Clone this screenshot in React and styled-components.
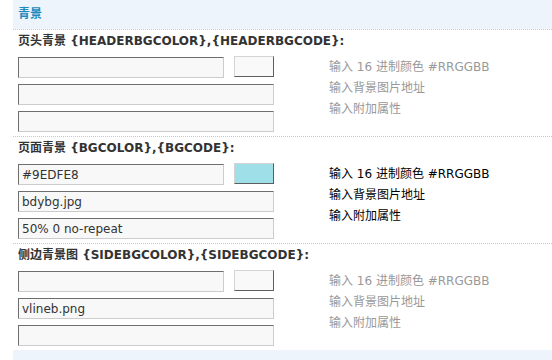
import React from "react";
import styled, { createGlobalStyle } from "styled-components";

const Global = createGlobalStyle`
  html, body { margin: 0; padding: 0; background: #fff; }
  body {
    font-family: "DejaVu Sans", "Noto Sans CJK SC", sans-serif;
    font-size: 12px;
    color: #333;
  }
`;

const Page = styled.div`
  margin-left: 13px;
  width: 539px;
`;

const Header = styled.div`
  height: 29px;
  line-height: 29px;
  padding-left: 5px;
  background: #eef4fb;
  color: #1b8bbf;
  font-weight: bold;
  font-size: 12px;
`;

const Section = styled.div`
  border-top: 1px dotted #c8c8c8;
  padding: 1px 0 4px 5px;
  display: grid;
  grid-template-columns: 311px 1fr;
  grid-template-rows: 20px auto;
  row-gap: 6px;
`;

const Label = styled.div`
  grid-column: 1 / 3;
  line-height: 20px;
  font-weight: bold;
  color: #333;
  white-space: nowrap;
`;

const Inputs = styled.div`
  display: flex;
  flex-direction: column;
  gap: 6px;
`;

const Row = styled.div`
  display: flex;
  gap: 10px;
`;

const Field = styled.input`
  box-sizing: border-box;
  width: ${(p) => (p.$short ? "206px" : "256px")};
  height: 21px;
  margin: 0;
  padding: 0 3px;
  background: #f8f8f8;
  border: 1px solid #ccc;
  border-top-color: #6e6e6e;
  border-left-color: #6e6e6e;
  font-family: "DejaVu Sans", "Noto Sans CJK SC", sans-serif;
  font-size: 12px;
  color: #333;
  outline: none;
`;

const Swatch = styled.div`
  box-sizing: border-box;
  width: 40px;
  height: 21px;
  margin-top: -1px;
  background: ${(p) => p.$color || "#f9f9f9"};
  border: 1px solid #d4d4d4;
  border-bottom-color: #5e5e5e;
  border-right-color: #5e5e5e;
`;

const Hints = styled.div`
  display: flex;
  flex-direction: column;
  line-height: 21px;
  color: ${(p) => (p.$active ? "#000" : "#999")};
  white-space: nowrap;
`;

const Footer = styled.div`
  height: 10px;
  background: #eef4fb;
`;

const sections = [
  {
    label: "页头青景 {HEADERBGCOLOR},{HEADERBGCODE}:",
    color: "",
    swatch: "",
    image: "",
    extra: "",
    active: false,
  },
  {
    label: "页面青景 {BGCOLOR},{BGCODE}:",
    color: "#9EDFE8",
    swatch: "#9edfe8",
    image: "bdybg.jpg",
    extra: "50% 0 no-repeat",
    active: true,
  },
  {
    label: "侧边青景图 {SIDEBGCOLOR},{SIDEBGCODE}:",
    color: "",
    swatch: "",
    image: "vlineb.png",
    extra: "",
    active: false,
  },
];

export default function App() {
  return (
    <Page>
      <Global />
      <Header>青景</Header>
      {sections.map((s, i) => (
        <Section key={i}>
          <Label>{s.label}</Label>
          <Inputs>
            <Row>
              <Field $short defaultValue={s.color} />
              <Swatch $color={s.swatch} />
            </Row>
            <Field defaultValue={s.image} />
            <Field defaultValue={s.extra} />
          </Inputs>
          <Hints $active={s.active}>
            <span>输入 16 进制颜色 #RRGGBB</span>
            <span>输入背景图片地址</span>
            <span>输入附加属性</span>
          </Hints>
        </Section>
      ))}
      <Footer />
    </Page>
  );
}
